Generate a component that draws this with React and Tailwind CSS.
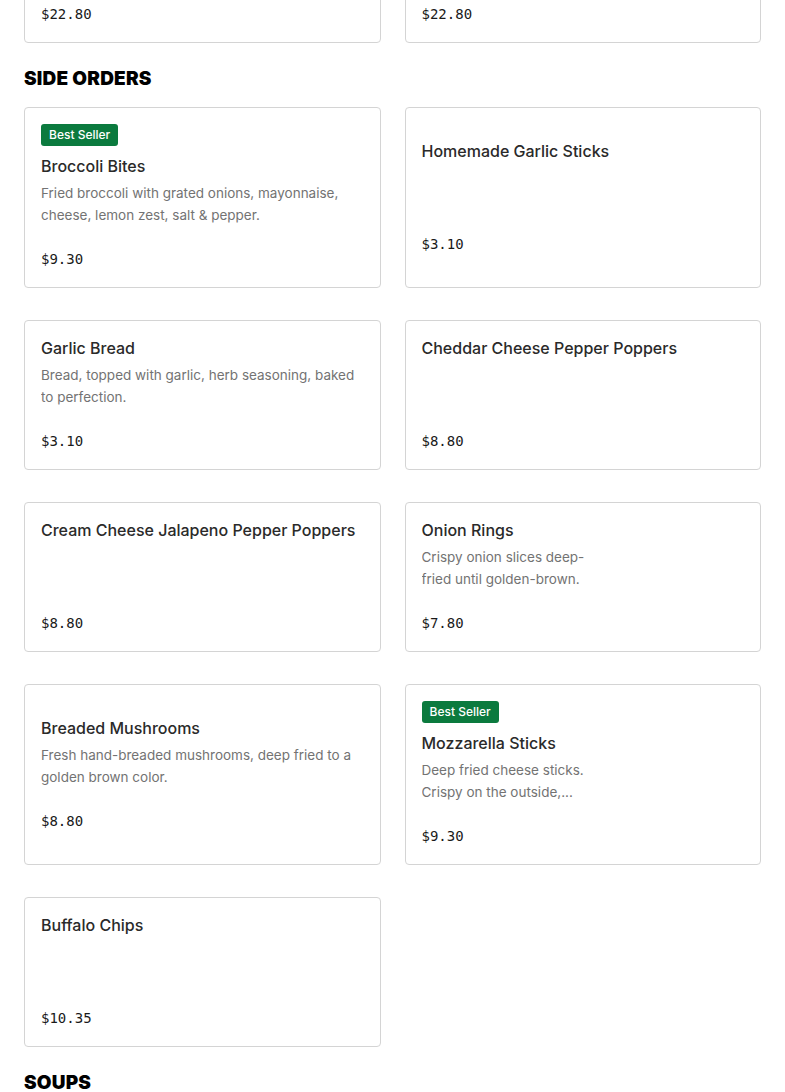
import React from 'react';

const sideOrders = [
  {
    name: 'Broccoli Bites',
    desc: 'Fried broccoli with grated onions, mayonnaise, cheese, lemon zest, salt & pepper.',
    price: '$9.30',
    best: true,
  },
  { name: 'Homemade Garlic Sticks', price: '$3.10' },
  {
    name: 'Garlic Bread',
    desc: 'Bread, topped with garlic, herb seasoning, baked to perfection.',
    price: '$3.10',
  },
  { name: 'Cheddar Cheese Pepper Poppers', price: '$8.80' },
  { name: 'Cream Cheese Jalapeno Pepper Poppers', price: '$8.80' },
  {
    name: 'Onion Rings',
    desc: 'Crispy onion slices deep-fried until golden-brown.',
    price: '$7.80',
    narrow: true,
  },
  {
    name: 'Breaded Mushrooms',
    desc: 'Fresh hand-breaded mushrooms, deep fried to a golden brown color.',
    price: '$8.80',
  },
  {
    name: 'Mozzarella Sticks',
    desc: 'Deep fried cheese sticks. Crispy on the outside,...',
    price: '$9.30',
    best: true,
    narrow: true,
  },
  { name: 'Buffalo Chips', price: '$10.35' },
];

const sans = { fontFamily: 'Inter, "Noto Sans", sans-serif' };

const Price = ({ children, className = '' }) => (
  <div
    className={`text-[14px] leading-6 font-medium text-[#1a1a1a] ${className}`}
    style={{ fontFamily: '"DejaVu Sans Mono", "Liberation Mono", monospace' }}
  >
    {children}
  </div>
);

const MenuCard = ({ item }) => (
  <div className="bg-white border border-[#d4d4d4] rounded-[4px] p-4 flex flex-col justify-center">
    {item.best && (
      <div className="self-start h-[22px] px-2 mb-[9px] rounded-[3px] bg-[#0b7a3e] text-white text-[12px] font-medium leading-[22px]">
        Best Seller
      </div>
    )}
    <div className="text-[16px] leading-[22px] font-medium text-[#2a2a2a]">
      {item.name}
    </div>
    <div
      className={`mt-[5px] h-[44px] text-[13.5px] leading-[22px] text-[#737373] overflow-hidden ${
        item.narrow ? 'w-[172px]' : ''
      }`}
    >
      {item.desc}
    </div>
    <Price className="mt-[21px]">{item.price}</Price>
  </div>
);

const SectionTitle = ({ children }) => (
  <h2 className="mt-[24px] mb-[16px] text-[19px] leading-6 font-black uppercase text-black tracking-[0.2px]">
    {children}
  </h2>
);

export default function App() {
  return (
    <div className="bg-white min-h-screen px-6 overflow-hidden" style={sans}>
      <div className="grid grid-cols-2 gap-x-6 -mt-[15px]">
        <div className="bg-white border border-[#d4d4d4] rounded-[4px] p-4">
          <Price>$22.80</Price>
        </div>
        <div className="bg-white border border-[#d4d4d4] rounded-[4px] p-4">
          <Price>$22.80</Price>
        </div>
      </div>

      <SectionTitle>Side Orders</SectionTitle>
      <div className="grid grid-cols-2 gap-x-6 gap-y-8">
        {sideOrders.map((item) => (
          <MenuCard key={item.name} item={item} />
        ))}
      </div>

      <SectionTitle>Soups</SectionTitle>
    </div>
  );
}
